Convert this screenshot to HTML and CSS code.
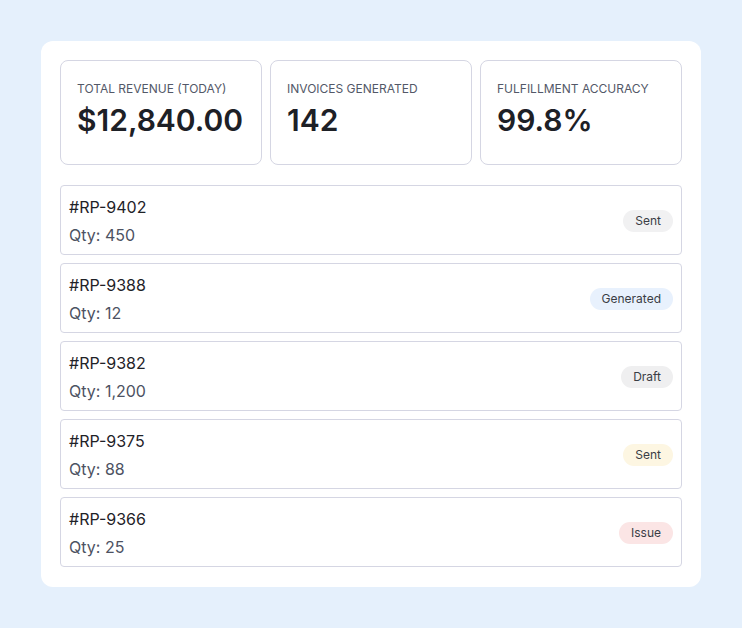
FILE: index.html
```html
<!DOCTYPE html>
<html lang="en">
<head>
	<meta charset="utf-8" />
	<title>Invoices</title>
	<link rel="stylesheet" href="styles.css">
</head>
<body>
<div class="panel">
	<div class="metrics">
		<div class="metric">
			<div class="metricLabel">Total Revenue (Today)</div>
			<div class="metricValue">$12,840.00</div>
		</div>
		<div class="metric">
			<div class="metricLabel">Invoices Generated</div>
			<div class="metricValue">142</div>
		</div>
		<div class="metric">
			<div class="metricLabel">Fulfillment Accuracy</div>
			<div class="metricValue">99.8%</div>
		</div>
	</div>

	<div class="orders">
		<div class="order">
			<div class="orderInfo">
				<div class="orderId">#RP-9402</div>
				<div class="orderQty">Qty: 450</div>
			</div>
			<span class="badge sent">Sent</span>
		</div>
		<div class="order">
			<div class="orderInfo">
				<div class="orderId">#RP-9388</div>
				<div class="orderQty">Qty: 12</div>
			</div>
			<span class="badge generated">Generated</span>
		</div>
		<div class="order">
			<div class="orderInfo">
				<div class="orderId">#RP-9382</div>
				<div class="orderQty">Qty: 1,200</div>
			</div>
			<span class="badge draft">Draft</span>
		</div>
		<div class="order">
			<div class="orderInfo">
				<div class="orderId">#RP-9375</div>
				<div class="orderQty">Qty: 88</div>
			</div>
			<span class="badge pending">Sent</span>
		</div>
		<div class="order">
			<div class="orderInfo">
				<div class="orderId">#RP-9366</div>
				<div class="orderQty">Qty: 25</div>
			</div>
			<span class="badge issue">Issue</span>
		</div>
	</div>
</div>
</body>
</html>
```

FILE: styles.css
```css
html, body{
	margin:0;
	padding:0;
}

body{
	background-color: #e5f0fc;
	font-family: Inter, "Noto Sans", sans-serif;
	color: #1f2228;
	padding:41px;
	box-sizing:border-box;
	min-height:628px;
}

.panel{
	background-color: #fff;
	border-radius:12px;
	padding:19px 19px 20px 19px;
}

/* three stat boxes across the top */
.metrics{
	display:grid;
	grid-template-columns: repeat(3, 1fr);
	gap:8px;
}

.metric{
	border:1px solid #d5d6e3;
	border-radius:8px;
	padding:20px 16px 0 16px;
	height:83px;
}

.metricLabel{
	font-size:12px;
	line-height:16px;
	text-transform:uppercase;
	color:#535868;
}

.metricValue{
	font-size:30px;
	line-height:36px;
	font-weight:600;
	margin-top:5px;
	color:#1d2026;
}

.orders{
	margin-top:20px;
	display:flex;
	flex-direction:column;
	gap:8px;
}

.order{
	display:flex;
	align-items:center;
	justify-content:space-between;
	border:1px solid #d5d6e3;
	border-radius:4px;
	padding:9px 8px 7px 8px;
}

.orderId{
	font-size:16px;
	line-height:24px;
	color:#1f2228;
}

.orderQty{
	font-size:16px;
	line-height:24px;
	margin-top:4px;
	color:#4d5262;
}

.badge{
	font-size:12px;
	line-height:16px;
	padding:3px 12px;
	border-radius:999px;
	color:#3a3d45;
}

.sent{ background-color:#f1f1f2; }
.generated{ background-color:#e8f1fd; }
.draft{ background-color:#efeff0; }
.pending{ background-color:#fdf6e2; }
.issue{ background-color:#fbe5e5; }
```
